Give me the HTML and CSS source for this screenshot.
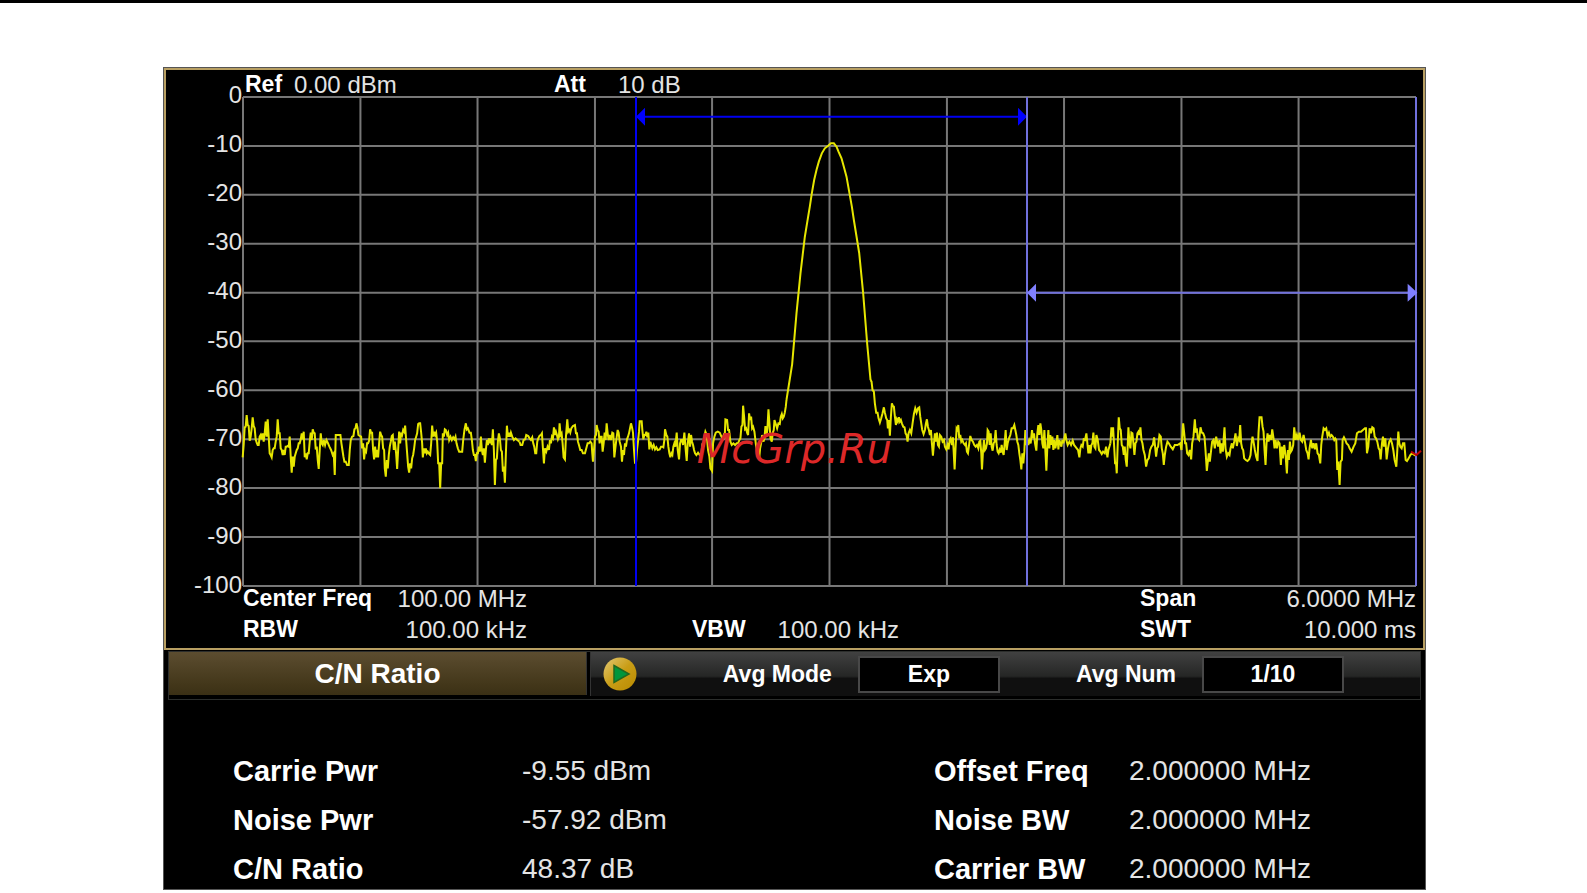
FILE: index.html
```
<!DOCTYPE html>
<html lang="en">

<head>
    <meta charset="UTF-8">
    <title>C/N Ratio</title>
    <link rel="stylesheet" href="styles.css">
</head>

<body>
    <div class="page-rule"></div>
    <div class="screen">
        <!-- spectrum chart -->
        <div class="chart">
            <div class="axis">
                <span>0</span><span>-10</span><span>-20</span><span>-30</span><span>-40</span><span>-50</span><span>-60</span><span>-70</span><span>-80</span><span>-90</span><span>-100</span>
            </div>
            <div class="chart-main">
                <div class="chart-header">
                    <b>Ref</b><span>0.00 dBm</span>
                    <b>Att</b><span>10 dB</span>
                </div>
                <div class="plot">
                    <svg class="plot-svg" viewBox="0 0 3516 1467" preserveAspectRatio="none">
                        <path class="grid" d="M0 0H3516M0 147H3516M0 293H3516M0 440H3516M0 587H3516M0 733H3516M0 880H3516M0 1027H3516M0 1173H3516M0 1320H3516M0 1467H3516M0 0V1467M352 0V1467M703 0V1467M1055 0V1467M1406 0V1467M1758 0V1467M2110 0V1467M2461 0V1467M2813 0V1467M3164 0V1467M3516 0V1467" />
                        <!-- noise floor and carrier peak -->
                        <g class="trace">
                            <polyline transform="translate(-26 909)" points="25,172 28,135 31,82 34,80 37,45 40,75 43,78 46,122 49,110 52,85 55,52 58,78 61,85 64,118 67,128 70,135 73,135 76,110 79,105 82,118 85,100 88,125 91,100 94,65 97,110 100,58 103,110 106,160 109,165 112,172 115,150 118,145 121,145 124,125 127,110 130,58 133,100 136,100 139,145 142,150 145,165 148,150 151,165 154,140 157,140 160,138 163,140 166,110 169,170 172,218 175,170 178,200 181,170 184,160 187,150 190,145 193,130 196,130 199,118 202,100 205,118 208,95 211,172 214,160 217,178 220,160 223,160 226,125 229,98 232,120 235,88 238,98 241,100 244,148 247,140 250,180 253,207 256,150 259,100 262,130 265,135 268,120 272,135 276,120 280,128 285,140 290,150 295,165 298,160 301,225 304,105 308,105 312,105 318,105 321,130 324,150 327,170 330,185 334,185 338,195 343,195 346,150 349,120 353,110 357,108 360,88 363,85 366,70 369,82 372,105 376,108 380,110 383,145 386,130 389,178 392,150 395,155 398,130 401,130 404,122 407,88 410,98 413,98 416,150 419,178 422,140 425,172 428,150 431,172 434,130 437,95 440,105 443,110 446,145 449,150 451,205 454,230 457,180 460,205 463,165 466,140 469,125 472,108 475,105 478,150 481,125 485,160 488,207 491,150 494,95 497,130 500,98 503,105 506,90 509,95 512,77 515,120 518,160 521,200 524,218 527,190 530,205 533,175 536,165 539,145 542,120 545,110 548,100 551,72 554,70 557,70 560,98 563,130 565,172 568,145 571,160 574,145 577,160 580,155 584,162 587,165 590,130 593,77 596,110 599,95 602,105 605,98 608,125 611,190 614,190 617,265 620,190 623,190 625,100 628,110 631,88 634,90 638,105 641,98 644,120 648,110 652,120 656,112 660,118 663,110 666,130 670,145 674,155 678,155 683,155 686,120 690,88 694,70 697,88 700,85 705,98 709,98 712,120 715,150 718,165 721,165 724,183 727,160 730,160 733,140 736,155 739,110 742,150 745,165 748,145 751,188 754,150 757,120 760,135 763,115 766,130 769,115 772,135 775,88 778,150 781,255 784,180 787,175 790,125 793,100 796,115 799,150 802,155 805,215 808,200 811,248 814,160 817,77 820,110 823,98 826,110 829,98 833,110 838,120 843,115 848,120 855,125" />
                            <polyline transform="translate(829 909)" points="0,125 3,135 8,135 12,120 17,118 20,105 26,108 30,115 34,120 38,112 41,130 44,140 47,160 50,160 53,125 56,115 60,107 64,105 67,100 70,145 73,190 76,145 80,155 84,140 88,150 91,120 94,130 97,110 100,115 103,82 106,105 109,95 112,105 115,118 118,110 120,70 123,105 126,100 129,130 132,172 136,178 139,110 143,58 146,95 149,90 152,98 155,85 160,78 166,75 169,100 172,100 175,125 178,135 182,150 186,150 190,160 196,160 200,145 204,130 208,130 212,125 216,130 218,160 220,185 223,150 226,110 229,105 231,75 234,90 237,95 240,130 243,110 246,110 249,155 252,130 255,98 258,120 261,70 264,100 267,120 270,105 274,120 278,98 281,100 284,172 287,145 290,120 294,90 297,98 300,125 304,140 307,185 310,150 313,165 316,130 319,140 322,118 325,110 328,100 331,85 334,70 337,82 340,98 343,150 346,188 349,188 352,150 355,125 358,95 360,64 366,64 368,90 371,118 374,105 377,105 380,95 383,112 386,98 389,148 392,125 395,135 398,145 402,135 406,148 410,142 414,150 420,148 424,140 428,140 431,142 434,120 436,88 440,105 443,110 446,140 449,160 452,172 455,160 458,165 461,140 464,130 467,140 471,98 474,150 478,178 481,130 484,120 487,120 490,135 494,98 498,150 501,183 504,130 508,100 511,140 514,105 517,125 520,135 523,150 526,160 530,165 535,158 540,165 545,160 548,130 551,140 554,110 557,95 561,105 565,150 569,170 572,205 577,213 580,130 584,110 588,98 594,95 600,98 605,110 608,115 612,105 615,110 617,58 622,60 625,90 628,90 632,125 636,135 641,130 646,135 651,130 655,130 659,120 662,115 665,80 668,75 670,17 673,50 676,88 679,85 682,98 685,105 688,40 691,60 694,50 697,85 700,80 704,95 708,130 712,160 718,178 721,145 724,130 727,105 731,125 734,115 737,78 740,110 743,85 746,28 749,70 752,115 756,125 759,98 762,90 764,60 768,72 772,85 776,70 780,72 783,50 786,42 789,55 792,50 795,38 798,20 800,0" />
                            <polyline points="1629,909 1646,802 1659,650 1671,529 1684,420 1693,365 1699,329 1705,289 1712,249 1719,219 1726,194 1735,169 1744,154 1754,146 1762,139 1771,139 1779,149 1785,164 1794,184 1801,209 1809,239 1817,284 1825,329 1831,369 1847,468 1859,590 1871,741 1881,849" />
                            <polyline transform="translate(1669 849)" points="212,0 215,5 218,30 222,35 225,70 229,98 233,98 236,115 240,128 244,115 248,100 252,82 255,98 259,115 262,120 264,145 267,120 270,167 273,110 276,70 279,78 282,80 285,110 288,135 291,118 294,125 297,112 300,125 303,120 306,130 310,140 314,142 317,160 320,165 323,185 326,160 330,150 334,160 338,130 342,102 346,85 350,98 354,85 358,82 361,110 364,130 367,150 371,162 375,150 378,130 381,118 384,140 387,150 390,165 393,150 396,190 399,227 402,190 405,160 408,185 411,158 414,195 417,200 420,165 424,170 428,185 432,180 435,200 439,208 443,195 446,208 449,180 452,175 456,195 459,172 462,230 464,268 467,200 470,145 473,150 475,135 478,175 481,165 484,185 487,180 491,190 495,195 498,190 501,215 504,220 508,190 511,168 515,180 519,185 523,195 527,200 531,195 535,205 538,185 541,182 544,220 546,268 549,215 552,180 555,210 558,205 561,190 563,150 566,155 569,195 572,160 575,200 578,212 581,190 584,185 587,150 590,195 593,215 596,220 599,210 602,218 605,195 608,215 611,225 614,190 617,150 620,210 623,190 627,175 631,165 635,145 639,145 643,135 646,150 649,165 652,185 655,195 658,220 661,240 664,268 667,220 670,250 673,215 676,150 679,195 682,180 685,195 688,180 692,190 696,150 699,175 702,160 705,190 709,212 712,160 715,135 718,165 721,130 724,150 727,190 730,205 733,150 736,210 739,272 742,200 745,150 748,205 751,165 754,195 757,170 760,210 763,180 766,205 769,190 772,165 775,208 778,180 781,190 784,200 787,180 790,190 793,175 796,160 799,180 803,195 808,185 813,195 818,182 822,195 826,200 830,205 834,210 838,232 841,205 844,195 848,200 851,178 855,180 859,160 862,190 865,220 868,195 871,220 874,195 877,190 880,158 883,200 886,205 889,165 893,180 897,210 901,215 905,222 909,215 914,220 918,200 922,232 925,210 931,190" />
                            <polyline transform="translate(2569 909)" points="31,130 34,82 37,110 39,82 42,135 45,190 48,190 50,220 53,130 56,52 59,85 62,90 65,135 68,140 71,165 74,140 77,180 80,200 83,135 85,82 88,130 91,145 94,98 97,100 100,130 103,165 106,130 109,125 112,100 115,95 118,105 121,82 124,120 127,130 130,150 134,165 138,200 142,180 146,175 150,150 154,140 158,135 162,112 165,140 168,170 171,145 174,140 178,105 182,110 185,145 188,160 191,195 194,165 198,140 202,125 206,130 212,140 218,148 224,135 232,135 240,130 244,150 247,100 249,70 252,98 255,130 258,130 261,160 265,165 269,150 273,178 276,130 280,110 284,58 287,98 290,85 293,115 297,120 301,82 305,98 309,100 313,110 316,150 320,213 323,185 326,160 329,185 333,150 336,125 340,120 344,145 348,110 351,125 354,140 358,120 361,160 364,130 368,155 371,110 373,82 376,145 380,170 384,160 388,165 391,145 395,130 398,145 402,125 406,100 410,138 414,115 417,120 420,75 423,130 426,145 429,150 432,175 437,180 442,183 447,178 451,165 454,130 457,110 460,125 464,150 468,170 472,183 475,98 478,52 484,52 487,80 490,95 493,150 496,195 499,130 502,100 505,125 509,105 513,120 516,88 520,115 523,145 526,120 530,145 534,125 538,130 542,195 545,140 548,175 552,135 556,165 560,220 563,150 566,180 569,125 572,155 575,150 579,135 582,82 586,120 590,105 594,120 598,98 602,120 606,125 610,105 614,125 618,150 622,160 625,178 628,145 632,120 636,145 640,130 644,148 648,130 652,160 656,165 660,190 663,135 666,110 670,85 674,90 678,85 682,108 686,98 690,110 694,105 698,110 702,120 705,115 708,120 711,210 714,185 718,255 721,185 725,180 727,120 731,112 735,120 739,130 744,135 748,145 754,155 760,140 765,130 770,100 776,95 782,95 788,90 794,85 797,85 800,160 804,140 808,85 812,100 816,82 820,85 823,110 827,115 831,125 835,145 838,150 841,178 845,130 848,110 851,140 855,115 859,178 863,145 867,125 871,118 875,130 879,150 883,180 888,200 891,150 894,95 897,130 900,140 904,145 908,130 912,130 916,180 920,183 925,175 930,165 935,160 942,165 948,168" />
                        </g>
                        <!-- carrier and noise bandwidth -->
                        <path class="band carrier" d="M1178 0V1467M1178 59H2350" />
                        <path class="carrier-arrow" d="M1178 59L1205 32V86ZM2350 59L2323 32V86Z" />
                        <path class="band noise" d="M2350 0V1467M3516 0V1467M2350 587H3516" />
                        <path class="noise-arrow" d="M2350 587L2377 560V614ZM3520 587L3491 560V614Z" />
                        <path class="sweep-mark" d="M3501 1064L3517 1074L3531 1061" />
                    </svg>
                    <span class="watermark">McGrp.Ru</span>
                </div>
                <div class="chart-footer">
                    <div class="pair"><b>Center Freq</b><span>100.00 MHz</span></div>
                    <div class="pair last"><b>Span</b><span>6.0000 MHz</span></div>
                    <div class="pair"><b>RBW</b><span>100.00 kHz</span></div>
                    <div class="pair middle"><b>VBW</b><span>100.00 kHz</span></div>
                    <div class="pair last"><b>SWT</b><span>10.000 ms</span></div>
                </div>
            </div>
        </div>
        <!-- measurement bar -->
        <div class="bar">
            <div class="bar-title">C/N Ratio</div>
            <div class="bar-tools">
                <button class="play" type="button" aria-label="Run">
                    <svg width="34" height="34" viewBox="0 0 34 34">
                        <defs>
                            <linearGradient id="gold" x1="0" y1="0" x2="1" y2="1">
                                <stop offset="0" stop-color="#e3c975" />
                                <stop offset=".5" stop-color="#c99d16" />
                                <stop offset="1" stop-color="#b98a00" />
                            </linearGradient>
                        </defs>
                        <circle cx="17" cy="17" r="16.5" fill="url(#gold)" />
                        <path d="M11 8.5L26 17L11 25.5Z" fill="#00963c" stroke="#23671e" stroke-width="1.5" />
                    </svg>
                </button>
                <div class="field">
                    <label for="avgMode">Avg Mode</label>
                    <input type="text" id="avgMode" value="Exp">
                </div>
                <div class="field">
                    <label for="avgNum">Avg Num</label>
                    <input type="text" id="avgNum" value="1/10">
                </div>
            </div>
        </div>
        <!-- results -->
        <div class="results">
            <b>Carrie Pwr</b><span>-9.55 dBm</span><b>Offset Freq</b><span>2.000000 MHz</span>
            <b>Noise Pwr</b><span>-57.92 dBm</span><b>Noise BW</b><span>2.000000 MHz</span>
            <b>C/N Ratio</b><span>48.37 dB</span><b>Carrier BW</b><span>2.000000 MHz</span>
        </div>
    </div>
</body>

</html>
```
FILE: styles.css
```
* {
    padding: 0px;
    margin: 0px;
    box-sizing: border-box;
}

body {
    background: #ffffff;
    font-family: "Liberation Sans", Arial, sans-serif;
    color: #e4e4e4;
}

b {
    color: #ffffff;
}

.page-rule {
    height: 3px;
    background: #000000;
}

.screen {
    margin: 64px 161px 0px 163px;
    border: 1px solid #555555;
    background: #000000;
}

/* 频谱图 */
.chart {
    display: flex;
    border: 2px solid #b89f62;
    padding-right: 7px;
    font-size: 24px;
    line-height: 25px;
}

.chart b {
    font-size: 23px;
}

.axis {
    width: 77px;
    padding-right: 1px;
    text-align: right;
}

.axis span {
    display: block;
    height: 49px;
    line-height: 49px;
}

.chart-main {
    flex: 1;
    min-width: 0;
}

.chart-header {
    display: grid;
    grid-template-columns: 49px 260px 64px 1fr;
    height: 27px;
    padding: 2px 0px 0px 2px;
}

.plot {
    position: relative;
}

.plot-svg {
    display: block;
    width: 100%;
    height: 489px;
    overflow: visible;
}

.plot-svg path,
.plot-svg polyline {
    fill: none;
    vector-effect: non-scaling-stroke;
}

.grid {
    stroke: #777777;
    stroke-width: 2px;
}

.trace {
    stroke: #e6e600;
    stroke-width: 2px;
}

.band {
    stroke-width: 2px;
}

.carrier {
    stroke: #0000f0;
}

.noise {
    stroke: #7070dc;
}

.plot-svg .carrier-arrow {
    fill: #0000ff;
}

.plot-svg .noise-arrow {
    fill: #8080ff;
}

.sweep-mark {
    stroke: #c00000;
    stroke-width: 2px;
}

.watermark {
    position: absolute;
    left: 47%;
    top: 72%;
    transform: translate(-50%, -50%);
    font-family: "DejaVu Sans", sans-serif;
    font-style: italic;
    font-size: 40px;
    line-height: 40px;
    color: #dd2828;
}

.chart-footer {
    display: grid;
    grid-template-columns: 284fr 165fr 207fr 241fr 276fr;
    row-gap: 6px;
    padding-bottom: 6px;
}

.pair {
    display: flex;
    justify-content: space-between;
    grid-column: 1;
    white-space: nowrap;
}

.pair.middle {
    grid-column: 3;
}

.pair.last {
    grid-column: 5;
}

/* 测量栏 */
.bar {
    display: grid;
    grid-template-columns: 418fr 830fr;
    gap: 3px;
    margin: 1px 4px 0px 4px;
    border: 1px solid #2c2e2c;
    height: 49px;
    color: #ffffff;
    font-weight: bold;
}

.bar-title {
    margin-bottom: 4px;
    border-right: 1px solid #333333;
    background: linear-gradient(#5c4d30, #43371a 75%, #3b3015);
    text-align: center;
    font-size: 28px;
    line-height: 43px;
}

.bar-tools {
    display: flex;
    align-items: center;
    padding: 0px 76px 0px 12px;
    margin-bottom: 3px;
    border-left: 1px solid #333333;
    background: linear-gradient(#414141, #252625 55%, #101010 60%, #101010);
}

.play {
    width: 34px;
    height: 34px;
    border: none;
    background: none;
    cursor: pointer;
}

.play svg {
    display: block;
}

.field {
    display: flex;
    align-items: center;
    margin-left: auto;
    font-size: 23px;
}

.field + .field {
    margin-left: 76px;
}

.field label {
    margin-right: 26px;
}

.field input {
    width: 142px;
    height: 37px;
    border: 2px solid #484848;
    background: #000000;
    color: #ffffff;
    font: inherit;
    text-align: center;
}

/* 测量结果 */
.results {
    display: grid;
    grid-template-columns: 289fr 412fr 195fr 296fr;
    row-gap: 19px;
    padding: 56px 0px 5px 69px;
    font-size: 28px;
    line-height: 30px;
}

.results b {
    font-size: 29px;
}
```
